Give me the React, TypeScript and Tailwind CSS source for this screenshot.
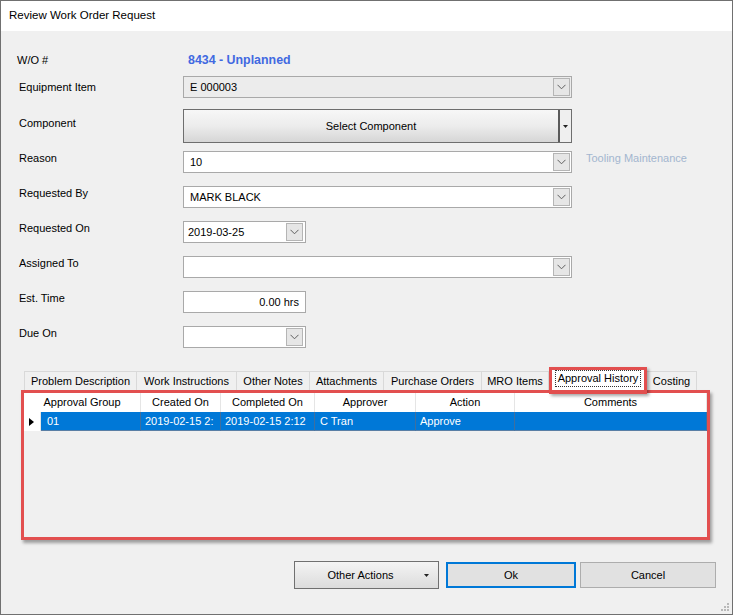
import React from "react";

function Chevron() {
  return (
    <svg width="9" height="6" viewBox="0 0 9 6" className="block">
      <path d="M0.5 0.8 L4.5 4.8 L8.5 0.8" fill="none" stroke="#5f5f5f" strokeWidth="1" />
    </svg>
  );
}

function DropBtn() {
  return (
    <div className="w-[17px] h-[18px] bg-[#e6e6e6] border border-[#b5b5b5] flex items-center justify-center shrink-0">
      <Chevron />
    </div>
  );
}

function Combo({ value, width, bg = "bg-white" }: { value: string; width: string; bg?: string }) {
  return (
    <div className={`${width} h-[22px] ${bg} border border-[#a9a9a9] flex items-center pl-[6px] pr-[1px]`}>
      <span className="flex-1 text-[11px] leading-[14px] text-black">{value}</span>
      <DropBtn />
    </div>
  );
}

function Row({ label, children, mt, h, labelPt = "pt-0", align = "items-start" }: { label: string; children: React.ReactNode; mt: string; h: string; labelPt?: string; align?: string }) {
  return (
    <div className={`flex ${align} ${mt} ${h}`}>
      <div className={`w-[182px] shrink-0 pl-[18px] text-[11px] leading-[14px] text-black ${labelPt}`}>{label}</div>
      {children}
    </div>
  );
}

const tabs = [
  { name: "Problem Description", w: "w-[113px]" },
  { name: "Work Instructions", w: "w-[100px]" },
  { name: "Other Notes", w: "w-[73px]" },
  { name: "Attachments", w: "w-[74px]" },
  { name: "Purchase Orders", w: "w-[98px]" },
  { name: "MRO Items", w: "w-[67px]" },
];

const cols = [
  { name: "Approval Group", w: "w-[100px]", hw: "w-[117px]", v: "01", align: "pl-[6px]" },
  { name: "Created On", w: "w-[80px]", hw: "w-[80px]", v: "2019-02-15 2:", align: "pl-[4px]" },
  { name: "Completed On", w: "w-[94px]", hw: "w-[94px]", v: "2019-02-15 2:12", align: "pl-[4px]" },
  { name: "Approver", w: "w-[101px]", hw: "w-[101px]", v: "C Tran", align: "pl-[5px]" },
  { name: "Action", w: "w-[99px]", hw: "w-[99px]", v: "Approve", align: "pl-[4px]" },
  { name: "Comments", w: "w-[192px]", hw: "w-[192px]", v: "", align: "pl-[4px]" },
];

export default function App() {
  return (
    <div className="w-[733px] h-[615px] border border-[#707070] flex flex-col font-['Liberation_Sans',Arial,sans-serif] text-black overflow-hidden">
      <div className="h-[30px] bg-white flex items-center pl-[8px] text-[11.5px] shrink-0">Review Work Order Request</div>
      <div className="flex-1 bg-[#f0f0f0] flex flex-col relative">
        {/* W/O */}
        <div className="flex items-center mt-[22px] h-[14px]">
          <div className="w-[182px] shrink-0 pl-[16px] text-[11px]">W/O #</div>
          <div className="pl-[5px] text-[12.4px] font-bold text-[#4169e1]">8434 - Unplanned</div>
        </div>
        <Row label="Equipment Item" mt="mt-[9px]" h="h-[22px]" align="items-center">
          <Combo value="E 000003" width="w-[389px]" bg="bg-[#ececec]" />
        </Row>
        <Row label="Component" mt="mt-[11px]" h="h-[34px]" labelPt="pt-[7px]">
          <div className="w-[389px] h-[34px] border border-[#6e6e6e] flex">
            <div className="flex-1 bg-linear-to-b from-[#f7f7f7] via-[#ececec] to-[#d6d6d6] flex items-center justify-center text-[11px]">
              Select Component
            </div>
            <div className="w-[2px] bg-[#5a5a5a]" />
            <div className="w-[11px] bg-[#efefef] flex items-center justify-center">
              <svg width="5" height="3" viewBox="0 0 5 3"><path d="M0 0 L5 0 L2.5 3 Z" fill="#222" /></svg>
            </div>
          </div>
        </Row>
        <Row label="Reason" mt="mt-[8px]" h="h-[22px]">
          <Combo value="10" width="w-[389px]" />
          <div className="ml-[14px] text-[11px] leading-[14px] text-[#a3b6cf]">Tooling Maintenance</div>
        </Row>
        <Row label="Requested By" mt="mt-[13px]" h="h-[22px]">
          <Combo value="MARK BLACK" width="w-[389px]" />
        </Row>
        <Row label="Requested On" mt="mt-[13px]" h="h-[22px]">
          <div className="w-[123px] h-[22px] bg-white border border-[#a9a9a9] flex items-center pl-[4px] pr-[2px]">
            <span className="flex-1 text-[11px]">2019-03-25</span>
            <DropBtn />
          </div>
        </Row>
        <Row label="Assigned To" mt="mt-[13px]" h="h-[22px]">
          <Combo value="" width="w-[389px]" />
        </Row>
        <Row label="Est. Time" mt="mt-[13px]" h="h-[22px]">
          <div className="w-[123px] h-[22px] bg-white border border-[#a9a9a9] flex items-center justify-end pr-[6px] text-[11px]">
            0.00 hrs
          </div>
        </Row>
        <Row label="Due On" mt="mt-[13px]" h="h-[22px]">
          <div className="w-[123px] h-[22px] bg-white border border-[#a9a9a9] flex items-center pl-[4px] pr-[2px]">
            <span className="flex-1" />
            <DropBtn />
          </div>
        </Row>

        {/* Tabs */}
        <div className="ml-[20px] mt-[20px] flex flex-col">
          <div className="relative z-10 flex items-end h-[22px] pl-[3px]">
            {tabs.map((t, i) => (
              <div
                key={t.name}
                className={`${t.w} h-[19px] border-t border-r border-[#d9d9d9] ${i === 0 ? "border-l" : ""} bg-[#f0f0f0] flex items-center justify-center text-[11px] whitespace-nowrap`}
              >
                {t.name}
              </div>
            ))}
            <div className="relative w-[98px] h-[22px] bg-white border-t border-r border-l border-[#d9d9d9] flex items-start justify-center pt-[2px] text-[11px]">
              <span className="px-[2px] leading-[15px] outline outline-1 outline-dotted outline-[#333] whitespace-nowrap">Approval History</span>
              <div className="absolute left-[-1px] right-[-1px] top-[-2px] bottom-[-4px] border-[3px] border-[#e24f4f] shadow-[2px_2px_3px_rgba(0,0,0,0.35)]" />
            </div>
            <div className="w-[50px] h-[19px] border-t border-r border-[#d9d9d9] bg-[#f0f0f0] flex items-center justify-center text-[11px]">
              Costing
            </div>
          </div>
          <div className="w-[689px] h-[150px] border-[3px] border-[#e24f4f] shadow-[2px_3px_3px_rgba(0,0,0,0.35)] bg-[#f0f0f0] flex flex-col">
            <div className="flex h-[19px] bg-white text-[11px]">
              {cols.map((c) => (
                <div key={c.name} className={`${c.hw} border-r border-[#e5e5e5] flex items-center justify-center whitespace-nowrap`}>
                  {c.name}
                </div>
              ))}
            </div>
            <div className="flex h-[19px] text-[11px]">
              <div className="w-[17px] bg-white border-r border-[#e5e5e5] flex items-center pl-[5px]">
                <svg width="5" height="8" viewBox="0 0 5 8"><path d="M0 0 L5 4 L0 8 Z" fill="#000" /></svg>
              </div>
              {cols.map((c) => (
                <div
                  key={c.name}
                  className={`${c.w} bg-[#0078d7] text-white border-r border-[#3f6f9e] border-b border-b-[#5a7fa5] flex items-center ${c.align} overflow-hidden whitespace-nowrap`}
                >
                  {c.v}
                </div>
              ))}
            </div>
          </div>
        </div>

        {/* Buttons */}
        <div className="flex items-center justify-end mt-[21px] pr-[16px]">
          <div className="w-[145px] h-[28px] border border-[#707070] bg-linear-to-b from-[#f4f4f4] to-[#dcdcdc] flex items-center text-[11px]">
            <span className="flex-1 text-center pl-[2px]">Other Actions</span>
            <svg width="5" height="3" viewBox="0 0 5 3" className="mr-[9px]"><path d="M0 0 L5 0 L2.5 3 Z" fill="#222" /></svg>
          </div>
          <div className="ml-[7px] w-[130px] h-[26px] border-2 border-[#0078d7] bg-[#e1e1e1] flex items-center justify-center text-[11px]">
            Ok
          </div>
          <div className="ml-[4px] w-[136px] h-[26px] border border-[#adadad] bg-[#e1e1e1] flex items-center justify-center text-[11px]">
            Cancel
          </div>
        </div>

        <svg width="10" height="10" viewBox="0 0 10 10" className="absolute right-[2px] bottom-[2px]">
          <rect x="7" y="1" width="2" height="2" fill="#b8b8b8" />
          <rect x="4" y="4" width="2" height="2" fill="#b8b8b8" />
          <rect x="7" y="4" width="2" height="2" fill="#b8b8b8" />
          <rect x="1" y="7" width="2" height="2" fill="#b8b8b8" />
          <rect x="4" y="7" width="2" height="2" fill="#b8b8b8" />
          <rect x="7" y="7" width="2" height="2" fill="#b8b8b8" />
        </svg>
      </div>
    </div>
  );
}
